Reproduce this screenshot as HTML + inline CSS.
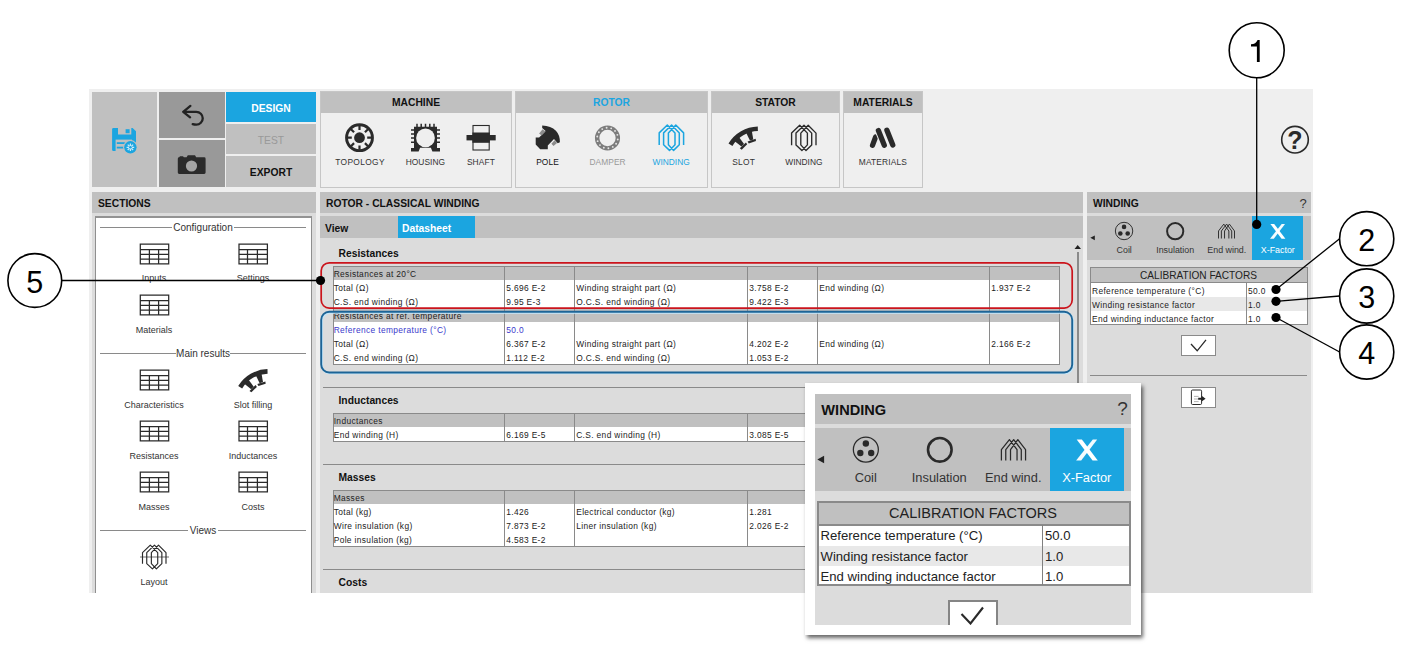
<!DOCTYPE html>
<html><head><meta charset="utf-8">
<style>
*{box-sizing:border-box;margin:0;padding:0}
html,body{width:1407px;height:657px;background:#fff;overflow:hidden}
body{position:relative;font-family:"Liberation Sans",sans-serif;color:#222}
.a{position:absolute;white-space:nowrap}
.app{left:89px;top:89px;width:1224px;height:504px;background:#efefef;overflow:hidden}
.g{background:#c0c0c0}
.dg{background:#999}
.bl{background:#1ba5e0}
.hd{font-weight:bold;font-size:10.3px;color:#111;line-height:23px}
.ctr{text-align:center}
.tl{font-size:8.4px;color:#333}
.sl{font-size:9px;color:#333}
.pn{border:1px solid #c6c6c6;background:#efefef}
.ph{left:0;top:0;right:0;height:21px;background:#c0c0c0;text-align:center;line-height:22px}
svg{position:absolute;overflow:visible}
.t{font-size:8.4px;letter-spacing:.36px;color:#222;line-height:14px}
.sec{font-weight:bold;font-size:10.3px;color:#111}
</style></head><body>
<div class="a app" id="app">

<div class="a g" style="left:3px;top:3px;width:65px;height:95px;"></div>
<div class="a dg" style="left:70px;top:3px;width:66px;height:46px;"></div>
<div class="a dg" style="left:70px;top:51px;width:66px;height:47px;"></div>
<div class="a bl hd ctr" style="left:137px;top:3px;width:90px;height:30px;line-height:33px;color:#fff">DESIGN</div>
<div class="a g hd ctr" style="left:137px;top:35px;width:90px;height:30px;line-height:33px;color:#999;font-weight:normal">TEST</div>
<div class="a g hd ctr" style="left:137px;top:67px;width:90px;height:31px;line-height:34px">EXPORT</div>
<div class="a pn" style="left:231px;top:2px;width:192px;height:97px"><div class="a ph hd" style="color:#111">MACHINE</div></div>
<div class="a pn" style="left:426px;top:2px;width:193px;height:97px"><div class="a ph hd" style="color:#1ba5e0">ROTOR</div></div>
<div class="a pn" style="left:622px;top:2px;width:129px;height:97px"><div class="a ph hd" style="color:#111">STATOR</div></div>
<div class="a pn" style="left:754px;top:2px;width:80px;height:97px"><div class="a ph hd" style="color:#111">MATERIALS</div></div>
<div class="a tl" style="left:171.077px;top:68px;width:200px;text-align:center;line-height:10px;color:#333;letter-spacing:0.355px">TOPOLOGY</div>
<div class="a tl" style="left:236.415px;top:68px;width:200px;text-align:center;line-height:10px;color:#333;letter-spacing:0.03px">HOUSING</div>
<div class="a tl" style="left:291.97px;top:68px;width:200px;text-align:center;line-height:10px;color:#333;letter-spacing:0.14px">SHAFT</div>
<div class="a tl" style="left:358.54px;top:68px;width:200px;text-align:center;line-height:10px;color:#111;letter-spacing:0.08px">POLE</div>
<div class="a tl" style="left:418.54px;top:68px;width:200px;text-align:center;line-height:10px;color:#999;letter-spacing:0.08px">DAMPER</div>
<div class="a tl" style="left:482.1px;top:68px;width:200px;text-align:center;line-height:10px;color:#1ba5e0;letter-spacing:0px">WINDING</div>
<div class="a tl" style="left:554.725px;top:68px;width:200px;text-align:center;line-height:10px;color:#333;letter-spacing:0.25px">SLOT</div>
<div class="a tl" style="left:614.9px;top:68px;width:200px;text-align:center;line-height:10px;color:#333;letter-spacing:0px">WINDING</div>
<div class="a tl" style="left:693.877px;top:68px;width:200px;text-align:center;line-height:10px;color:#333;letter-spacing:0.155px">MATERIALS</div>
<div class="a g hd" style="left:3px;top:103px;width:224px;height:21px;padding-left:6px">SECTIONS</div>
<div class="a g hd" style="left:231px;top:103px;width:763px;height:21px;padding-left:6px">ROTOR - CLASSICAL WINDING</div>
<div class="a g hd" style="left:998px;top:103px;width:224px;height:21px;padding-left:6px">WINDING</div>
<div class="a " style="left:3px;top:124px;width:224px;height:400px;background:#dcdcdc"></div>
<div class="a " style="left:6px;top:127px;width:217.4px;height:400px;background:#fff;border:1px solid #8f8f8f;border-top:2px solid #939393"></div>
<div class="a " style="left:11px;top:138px;width:206px;height:1px;background:#8a8a8a"></div>
<div class="a" style="left:83px;top:133.1px;width:62px;height:12px;background:#fff;text-align:center;font-size:10px;line-height:12px;color:#333">Configuration</div>
<div class="a " style="left:11px;top:264px;width:206px;height:1px;background:#8a8a8a"></div>
<div class="a" style="left:87px;top:259.1px;width:54px;height:12px;background:#fff;text-align:center;font-size:10px;line-height:12px;color:#333">Main results</div>
<div class="a " style="left:11px;top:441px;width:206px;height:1px;background:#8a8a8a"></div>
<div class="a" style="left:99px;top:436.1px;width:30px;height:12px;background:#fff;text-align:center;font-size:10px;line-height:12px;color:#333">Views</div>
<div class="a sl" style="left:-35px;top:184px;width:200px;text-align:center;line-height:10px;">Inputs</div>
<div class="a sl" style="left:64px;top:184px;width:200px;text-align:center;line-height:10px;">Settings</div>
<div class="a sl" style="left:-35px;top:235.5px;width:200px;text-align:center;line-height:10px;">Materials</div>
<div class="a sl" style="left:-35px;top:310.5px;width:200px;text-align:center;line-height:10px;">Characteristics</div>
<div class="a sl" style="left:64px;top:310.5px;width:200px;text-align:center;line-height:10px;">Slot filling</div>
<div class="a sl" style="left:-35px;top:361.5px;width:200px;text-align:center;line-height:10px;">Resistances</div>
<div class="a sl" style="left:64px;top:361.5px;width:200px;text-align:center;line-height:10px;">Inductances</div>
<div class="a sl" style="left:-35px;top:412.7px;width:200px;text-align:center;line-height:10px;">Masses</div>
<div class="a sl" style="left:64px;top:412.7px;width:200px;text-align:center;line-height:10px;">Costs</div>
<div class="a sl" style="left:-35px;top:487.7px;width:200px;text-align:center;line-height:10px;">Layout</div>
<div class="a " style="left:231px;top:124px;width:763px;height:400px;background:#dcdcdc"></div>
<div class="a g" style="left:231px;top:127px;width:763px;height:22px;"></div>
<div class="a hd" style="left:236px;top:127px;line-height:25.5px">View</div>
<div class="a bl hd" style="left:309px;top:127px;width:77px;height:22px;line-height:25.5px;color:#fff;padding-left:4px">Datasheet</div>
<div class="a sec" style="left:249.5px;top:158px;line-height:14px">Resistances</div>
<div class="a " style="left:243.5px;top:177px;width:727.5px;height:42.5px;background:#fff;border:1px solid #8a8a8a"></div>
<div class="a " style="left:244.5px;top:178px;width:725.5px;height:13px;background:#c0c0c0"></div>
<div class="a " style="left:415px;top:177px;width:1px;height:42.5px;background:#8a8a8a"></div>
<div class="a " style="left:485px;top:177px;width:1px;height:42.5px;background:#8a8a8a"></div>
<div class="a " style="left:658px;top:177px;width:1px;height:42.5px;background:#8a8a8a"></div>
<div class="a " style="left:728px;top:177px;width:1px;height:42.5px;background:#8a8a8a"></div>
<div class="a " style="left:900px;top:177px;width:1px;height:42.5px;background:#8a8a8a"></div>
<div class="a t" style="left:244.7px;top:177.8px;">Resistances at 20°C</div>
<div class="a t" style="left:244.7px;top:191.9px;color:#222">Total (Ω)</div>
<div class="a t" style="left:417.2px;top:191.9px;color:#222">5.696 E-2</div>
<div class="a t" style="left:487.2px;top:191.9px;color:#222">Winding straight part (Ω)</div>
<div class="a t" style="left:660.2px;top:191.9px;color:#222">3.758 E-2</div>
<div class="a t" style="left:730.2px;top:191.9px;color:#222">End winding (Ω)</div>
<div class="a t" style="left:902.2px;top:191.9px;color:#222">1.937 E-2</div>
<div class="a t" style="left:244.7px;top:205.9px;color:#222">C.S. end winding (Ω)</div>
<div class="a t" style="left:417.2px;top:205.9px;color:#222">9.95 E-3</div>
<div class="a t" style="left:487.2px;top:205.9px;color:#222">O.C.S. end winding (Ω)</div>
<div class="a t" style="left:660.2px;top:205.9px;color:#222">9.422 E-3</div>
<div class="a " style="left:243.5px;top:219.1px;width:727.5px;height:56.5px;background:#fff;border:1px solid #8a8a8a"></div>
<div class="a " style="left:244.5px;top:220.1px;width:725.5px;height:13px;background:#c0c0c0"></div>
<div class="a " style="left:415px;top:219.1px;width:1px;height:56.5px;background:#8a8a8a"></div>
<div class="a " style="left:485px;top:219.1px;width:1px;height:56.5px;background:#8a8a8a"></div>
<div class="a " style="left:658px;top:219.1px;width:1px;height:56.5px;background:#8a8a8a"></div>
<div class="a " style="left:728px;top:219.1px;width:1px;height:56.5px;background:#8a8a8a"></div>
<div class="a " style="left:900px;top:219.1px;width:1px;height:56.5px;background:#8a8a8a"></div>
<div class="a t" style="left:244.7px;top:219.9px;">Resistances at ref. temperature</div>
<div class="a t" style="left:244.7px;top:234px;color:#3a3acc">Reference temperature (°C)</div>
<div class="a t" style="left:417.2px;top:234px;color:#3a3acc">50.0</div>
<div class="a t" style="left:244.7px;top:248px;color:#222">Total (Ω)</div>
<div class="a t" style="left:417.2px;top:248px;color:#222">6.367 E-2</div>
<div class="a t" style="left:487.2px;top:248px;color:#222">Winding straight part (Ω)</div>
<div class="a t" style="left:660.2px;top:248px;color:#222">4.202 E-2</div>
<div class="a t" style="left:730.2px;top:248px;color:#222">End winding (Ω)</div>
<div class="a t" style="left:902.2px;top:248px;color:#222">2.166 E-2</div>
<div class="a t" style="left:244.7px;top:262px;color:#222">C.S. end winding (Ω)</div>
<div class="a t" style="left:417.2px;top:262px;color:#222">1.112 E-2</div>
<div class="a t" style="left:487.2px;top:262px;color:#222">O.C.S. end winding (Ω)</div>
<div class="a t" style="left:660.2px;top:262px;color:#222">1.053 E-2</div>
<div class="a " style="left:233.5px;top:298px;width:752px;height:1px;background:#8a8a8a"></div>
<div class="a sec" style="left:249.5px;top:305px;line-height:14px">Inductances</div>
<div class="a " style="left:243.5px;top:324.2px;width:727.5px;height:28.5px;background:#fff;border:1px solid #8a8a8a"></div>
<div class="a " style="left:244.5px;top:325.2px;width:725.5px;height:13px;background:#c0c0c0"></div>
<div class="a " style="left:415px;top:324.2px;width:1px;height:28.5px;background:#8a8a8a"></div>
<div class="a " style="left:485px;top:324.2px;width:1px;height:28.5px;background:#8a8a8a"></div>
<div class="a " style="left:658px;top:324.2px;width:1px;height:28.5px;background:#8a8a8a"></div>
<div class="a " style="left:728px;top:324.2px;width:1px;height:28.5px;background:#8a8a8a"></div>
<div class="a " style="left:900px;top:324.2px;width:1px;height:28.5px;background:#8a8a8a"></div>
<div class="a t" style="left:244.7px;top:325px;">Inductances</div>
<div class="a t" style="left:244.7px;top:339.1px;color:#222">End winding (H)</div>
<div class="a t" style="left:417.2px;top:339.1px;color:#222">6.169 E-5</div>
<div class="a t" style="left:487.2px;top:339.1px;color:#222">C.S. end winding (H)</div>
<div class="a t" style="left:660.2px;top:339.1px;color:#222">3.085 E-5</div>
<div class="a " style="left:233.5px;top:375px;width:752px;height:1px;background:#8a8a8a"></div>
<div class="a sec" style="left:249.5px;top:382px;line-height:14px">Masses</div>
<div class="a " style="left:243.5px;top:401.2px;width:727.5px;height:56.5px;background:#fff;border:1px solid #8a8a8a"></div>
<div class="a " style="left:244.5px;top:402.2px;width:725.5px;height:13px;background:#c0c0c0"></div>
<div class="a " style="left:415px;top:401.2px;width:1px;height:56.5px;background:#8a8a8a"></div>
<div class="a " style="left:485px;top:401.2px;width:1px;height:56.5px;background:#8a8a8a"></div>
<div class="a " style="left:658px;top:401.2px;width:1px;height:56.5px;background:#8a8a8a"></div>
<div class="a " style="left:728px;top:401.2px;width:1px;height:56.5px;background:#8a8a8a"></div>
<div class="a " style="left:900px;top:401.2px;width:1px;height:56.5px;background:#8a8a8a"></div>
<div class="a t" style="left:244.7px;top:402px;">Masses</div>
<div class="a t" style="left:244.7px;top:416.1px;color:#222">Total (kg)</div>
<div class="a t" style="left:417.2px;top:416.1px;color:#222">1.426</div>
<div class="a t" style="left:487.2px;top:416.1px;color:#222">Electrical conductor (kg)</div>
<div class="a t" style="left:660.2px;top:416.1px;color:#222">1.281</div>
<div class="a t" style="left:244.7px;top:430.1px;color:#222">Wire insulation (kg)</div>
<div class="a t" style="left:417.2px;top:430.1px;color:#222">7.873 E-2</div>
<div class="a t" style="left:487.2px;top:430.1px;color:#222">Liner insulation (kg)</div>
<div class="a t" style="left:660.2px;top:430.1px;color:#222">2.026 E-2</div>
<div class="a t" style="left:244.7px;top:444.1px;color:#222">Pole insulation (kg)</div>
<div class="a t" style="left:417.2px;top:444.1px;color:#222">4.583 E-2</div>
<div class="a " style="left:233.5px;top:479.5px;width:752px;height:1px;background:#8a8a8a"></div>
<div class="a sec" style="left:249.5px;top:486.7px;line-height:14px">Costs</div>
<div class="a " style="left:988px;top:163px;width:2px;height:345px;background:#8a8a8a"></div>
<svg style="left:985px;top:155px" width="8" height="6"><path d="M0.5 5 L3.7 1 L7 5 Z" fill="#222"/></svg>
<svg style="left:0;top:0" width="1224" height="504"><rect x="233.0" y="223.7" width="751" height="60.7" rx="8" fill="none" stroke="#c2e6fa" stroke-width="1.9"/><rect x="232.2" y="222.8" width="751" height="60.7" rx="8" fill="none" stroke="#1d6496" stroke-width="1.9"/><rect x="232.2" y="173.8" width="751" height="45.3" rx="8" fill="none" stroke="#cb141c" stroke-width="1.7"/></svg>
<div class="a " style="left:998px;top:124px;width:224px;height:400px;background:#dcdcdc"></div>
<div class="a g" style="left:998px;top:127px;width:224px;height:44px;"></div>
<div class="a bl" style="left:1163px;top:127px;width:51px;height:44px;"></div>
<div class="a " style="left:1210.5px;top:104.5px;font-size:13px;line-height:20px;color:#333">?</div>
<div class="a " style="left:935.2px;top:156.4px;width:200px;text-align:center;line-height:10px;color:#333;font-size:8.9px">Coil</div>
<div class="a " style="left:986.2px;top:156.4px;width:200px;text-align:center;line-height:10px;color:#333;font-size:8.9px">Insulation</div>
<div class="a " style="left:1037.8px;top:156.4px;width:200px;text-align:center;line-height:10px;color:#333;font-size:8.9px">End wind.</div>
<div class="a " style="left:1088.8px;top:156.4px;width:200px;text-align:center;line-height:10px;color:#fff;font-size:8.9px">X-Factor</div>
<div class="a " style="left:1001px;top:178px;width:218px;height:57.6px;background:#fff;border:1px solid #8a8a8a"></div>
<div class="a " style="left:1002px;top:179px;width:216px;height:15px;background:#c0c0c0;border-bottom:1px solid #8a8a8a"></div>
<div class="a " style="left:1009.5px;top:180.5px;width:200px;text-align:center;line-height:12px;font-size:10.1px;color:#222">CALIBRATION FACTORS</div>
<div class="a " style="left:1002px;top:208px;width:216px;height:14px;background:#e8e8e8"></div>
<div class="a " style="left:1156.5px;top:194px;width:1px;height:42px;background:#8a8a8a"></div>
<div class="a t" style="left:1003px;top:194.8px;">Reference temperature (°C)</div>
<div class="a t" style="left:1159px;top:194.8px;">50.0</div>
<div class="a t" style="left:1003px;top:208.8px;">Winding resistance factor</div>
<div class="a t" style="left:1159px;top:208.8px;">1.0</div>
<div class="a t" style="left:1003px;top:222.8px;">End winding inductance factor</div>
<div class="a t" style="left:1159px;top:222.8px;">1.0</div>
<div class="a " style="left:1092px;top:246px;width:35px;height:21px;background:#fff;border:1px solid #8a8a8a"></div>
<div class="a " style="left:1001px;top:286px;width:217px;height:1px;background:#8a8a8a"></div>
<div class="a " style="left:1092px;top:297.5px;width:35px;height:21px;background:#fff;border:1px solid #8a8a8a"></div>
<svg style="left:0;top:0;font-family:'Liberation Sans',sans-serif" width="1224" height="504" viewBox="89 89 1224 504">
<g>
<path d="M113.4 127.9 H132.6 L136 131.2 V149.7 Q136 151 134.7 151 H113.4 Q112.1 151 112.1 149.7 V129.2 Q112.1 127.9 113.4 127.9 Z" fill="#1ba5e0"/>
<rect x="118" y="127.5" width="13.3" height="7" fill="#c0c0c0"/>
<rect x="125.6" y="129.2" width="4" height="4" fill="#1ba5e0"/>
<rect x="115.6" y="139.6" width="16.4" height="11.8" fill="#c0c0c0"/>
<rect x="116.8" y="142.2" width="9.2" height="1.8" fill="#1ba5e0"/><rect x="116.8" y="146.7" width="7.4" height="1.8" fill="#1ba5e0"/>
<circle cx="130.4" cy="147.3" r="7.3" fill="#c0c0c0"/><circle cx="130.4" cy="147.3" r="6.2" fill="#1ba5e0"/>
<path d="M126.60 147.30 L134.20 147.30 M127.71 144.61 L133.09 149.99 M130.40 143.50 L130.40 151.10 M133.09 144.61 L127.71 149.99 " stroke="#c9e9f8" stroke-width="1.3" fill="none"/><circle cx="130.4" cy="147.3" r="1.3" fill="#1ba5e0"/>
</g>
<path d="M190.4 105.9 L183.2 111.8 L190.1 117.4 M183.6 111.8 H196.3 A6.45 6.45 0 0 1 196.3 124.7 Q194.2 124.7 192.7 124.2" fill="none" stroke="#222" stroke-width="2.3" stroke-linecap="round" stroke-linejoin="round"/>
<path d="M179.2 157.3 L180 156.3 H183 L183.8 157.3 H186.6 L187.8 155.2 H195 L196.2 157.3 H204.2 Q205.6 157.3 205.6 158.7 V172.6 Q205.6 174 204.2 174 H179.2 Q177.8 174 177.8 172.6 V158.7 Q177.8 157.3 179.2 157.3 Z" fill="#2a2a2a"/><circle cx="191.5" cy="166" r="5.6" fill="#a4a4a4"/>
<circle cx="359.5" cy="137.7" r="12.95" fill="none" stroke="#2a2a2a" stroke-width="2.9"/><circle cx="359.5" cy="137.7" r="5.4" fill="#2a2a2a"/>
<path d="M367.20 137.70 L371.50 137.70 M364.94 143.14 L367.99 146.19 M359.50 145.40 L359.50 149.70 M354.06 143.14 L351.01 146.19 M351.80 137.70 L347.50 137.70 M354.06 132.26 L351.01 129.21 M359.50 130.00 L359.50 125.70 M364.94 132.26 L367.99 129.21 " stroke="#2a2a2a" stroke-width="2.2" fill="none"/>
<path d="M414 126.8 H437 V148 H440 V151.5 H432.4 L430.9 147.7 H420.1 L418.6 151.5 H411 V148 H414 Z" fill="#2a2a2a"/><circle cx="425.5" cy="137.9" r="9.35" fill="#efefef"/>
<path d="M417.0 123.8 V127 M421.2 123.8 V127 M425.5 123.8 V127 M429.8 123.8 V127 M434.0 123.8 V127 M411 129.9 H414.2 M436.8 129.9 H440 M411 134.0 H414.2 M436.8 134.0 H440 M411 138.1 H414.2 M436.8 138.1 H440 M411 142.2 H414.2 M436.8 142.2 H440 " stroke="#2a2a2a" stroke-width="1.5" fill="none"/>
<rect x="473" y="125.5" width="16.2" height="24.5" fill="#efefef" stroke="#2a2a2a" stroke-width="1.1"/><rect x="472.4" y="132.5" width="17.4" height="10.3" fill="#2a2a2a"/><rect x="466.5" y="135" width="29.2" height="5.4" fill="#2a2a2a"/>
<path d="M542.2 125.6 Q551 126.2 555.9 130.7 Q560 135 559.9 142.2 L557.7 143.3 L554 139.1 L547.8 145.6 V149.3 H540.2 L535.7 144.5 V137.4 H539.1 L545.6 131 L542.2 127.9 Z" fill="#2a2a2a"/>
<path d="M539.1 133.6 L542.6 129.2 L545.4 131.4 L541.6 135.4 Z M551.4 143.7 L554.6 140.2 L557.1 143.1 L553.5 145.9 Z" fill="#8c8c8c"/>
<circle cx="607.5" cy="138" r="10.35" fill="none" stroke="#7c7c7c" stroke-width="4.4"/>
<circle cx="617.75" cy="139.44" r="0.95" fill="#e6e6e6"/>
<circle cx="616.11" cy="143.74" r="0.95" fill="#e6e6e6"/>
<circle cx="612.76" cy="146.91" r="0.95" fill="#e6e6e6"/>
<circle cx="608.38" cy="148.31" r="0.95" fill="#e6e6e6"/>
<circle cx="603.81" cy="147.67" r="0.95" fill="#e6e6e6"/>
<circle cx="599.98" cy="145.12" r="0.95" fill="#e6e6e6"/>
<circle cx="597.64" cy="141.15" r="0.95" fill="#e6e6e6"/>
<circle cx="597.25" cy="136.56" r="0.95" fill="#e6e6e6"/>
<circle cx="598.89" cy="132.26" r="0.95" fill="#e6e6e6"/>
<circle cx="602.24" cy="129.09" r="0.95" fill="#e6e6e6"/>
<circle cx="606.62" cy="127.69" r="0.95" fill="#e6e6e6"/>
<circle cx="611.19" cy="128.33" r="0.95" fill="#e6e6e6"/>
<circle cx="615.02" cy="130.88" r="0.95" fill="#e6e6e6"/>
<circle cx="617.36" cy="134.85" r="0.95" fill="#e6e6e6"/>
<path d="M659.20 145.00 L659.20 132.90 L667.30 125.00 L675.00 132.90 L675.00 144.70 L669.50 150.40 L663.60 144.70 L663.60 132.90 L671.60 125.00 L679.30 132.90 L679.30 144.70 L673.60 150.40 L668.40 144.70 L668.40 132.90 L675.80 125.00 L683.60 132.90 L683.60 145.00" fill="none" stroke="#1ba5e0" stroke-width="1.5" stroke-linejoin="round"/>
<path d="M791.60 145.20 L791.60 133.10 L799.70 125.20 L807.40 133.10 L807.40 144.90 L801.90 150.60 L796.00 144.90 L796.00 133.10 L804.00 125.20 L811.70 133.10 L811.70 144.90 L806.00 150.60 L800.80 144.90 L800.80 133.10 L808.20 125.20 L816.00 133.10 L816.00 145.20" fill="none" stroke="#2a2a2a" stroke-width="1.35" stroke-linejoin="round"/>
<path d="M728.51 143.51 A35.3 35.3 0 0 1 757.78 126.51 L757.90 131.11 A30.7 30.7 0 0 0 732.44 145.90 Z" fill="#2a2a2a"/>
<path d="M734.63 141.17 L741.50 146.53 L744.04 144.08 L738.92 137.03 Z" fill="#2a2a2a"/>
<path d="M739.81 148.33 L741.68 149.66 L747.16 144.37 L745.90 142.45 Z" fill="#2a2a2a"/>
<path d="M746.11 132.71 L749.94 140.54 L753.29 139.44 L751.78 130.86 Z" fill="#2a2a2a"/>
<path d="M747.63 141.41 L748.73 143.43 L755.97 141.08 L755.67 138.80 Z" fill="#2a2a2a"/>
<path d="M875.6 137 L872.5 145.4" stroke="#2a2a2a" stroke-width="5.2" stroke-linecap="round"/><path d="M878.4 130.6 L884.3 145.3" stroke="#efefef" stroke-width="7.2" stroke-linecap="round"/><path d="M878.4 130.6 L884.3 145.3 M886.9 130.3 L892.8 145" stroke="#2a2a2a" stroke-width="5.3" stroke-linecap="round"/>
<circle cx="1295" cy="139.7" r="13.3" fill="none" stroke="#2a2a2a" stroke-width="1.6"/><text x="1295" y="148.8" text-anchor="middle" font-size="25" font-weight="bold" fill="#2a2a2a">?</text>
<path d="M140.3 244.2 h28.4 v19.7 h-28.4 Z M140.3 249.7 h28.4 M140.3 254.39999999999998 h28.4 M140.3 259.09999999999997 h28.4 M149.4 249.7 v14.2 M158.60000000000002 249.7 v14.2" fill="none" stroke="#2a2a2a" stroke-width="1.25"/>
<path d="M239 244.2 h28.4 v19.7 h-28.4 Z M239 249.7 h28.4 M239 254.39999999999998 h28.4 M239 259.09999999999997 h28.4 M247.5 249.7 v14.2 M257.4 249.7 v14.2" fill="none" stroke="#2a2a2a" stroke-width="1.25"/>
<path d="M140.3 295.2 h28.4 v19.7 h-28.4 Z M140.3 300.7 h28.4 M140.3 305.4 h28.4 M140.3 310.09999999999997 h28.4 M149.4 300.7 v14.2 M158.60000000000002 300.7 v14.2" fill="none" stroke="#2a2a2a" stroke-width="1.25"/>
<path d="M140.3 370.2 h28.4 v19.7 h-28.4 Z M140.3 375.7 h28.4 M140.3 380.4 h28.4 M140.3 385.09999999999997 h28.4 M149.4 375.7 v14.2 M158.60000000000002 375.7 v14.2" fill="none" stroke="#2a2a2a" stroke-width="1.25"/>
<path d="M140.3 421.2 h28.4 v19.7 h-28.4 Z M140.3 426.7 h28.4 M140.3 431.4 h28.4 M140.3 436.09999999999997 h28.4 M149.4 426.7 v14.2 M158.60000000000002 426.7 v14.2" fill="none" stroke="#2a2a2a" stroke-width="1.25"/>
<path d="M239 421.2 h28.4 v19.7 h-28.4 Z M239 426.7 h28.4 M239 431.4 h28.4 M239 436.09999999999997 h28.4 M247.5 426.7 v14.2 M257.4 426.7 v14.2" fill="none" stroke="#2a2a2a" stroke-width="1.25"/>
<path d="M140.3 472.2 h28.4 v19.7 h-28.4 Z M140.3 477.7 h28.4 M140.3 482.4 h28.4 M140.3 487.09999999999997 h28.4 M149.4 477.7 v14.2 M158.60000000000002 477.7 v14.2" fill="none" stroke="#2a2a2a" stroke-width="1.25"/>
<path d="M239 472.2 h28.4 v19.7 h-28.4 Z M239 477.7 h28.4 M239 482.4 h28.4 M239 487.09999999999997 h28.4 M247.5 477.7 v14.2 M257.4 477.7 v14.2" fill="none" stroke="#2a2a2a" stroke-width="1.25"/>
<path d="M238.21 386.11 A35.3 35.3 0 0 1 267.48 369.11 L267.60 373.71 A30.7 30.7 0 0 0 242.14 388.50 Z" fill="#2a2a2a"/>
<path d="M244.33 383.77 L251.20 389.13 L253.74 386.68 L248.62 379.63 Z" fill="#2a2a2a"/>
<path d="M249.51 390.93 L251.38 392.26 L256.86 386.97 L255.60 385.05 Z" fill="#2a2a2a"/>
<path d="M255.81 375.31 L259.64 383.14 L262.99 382.04 L261.48 373.46 Z" fill="#2a2a2a"/>
<path d="M257.33 384.01 L258.43 386.03 L265.67 383.68 L265.37 381.40 Z" fill="#2a2a2a"/>
<path d="M140 557 H169" stroke="#9a9a9a" stroke-width="1.4"/>
<path d="M142.50 563.86 L142.50 552.57 L150.30 545.20 L157.72 552.57 L157.72 563.58 L152.42 568.90 L146.74 563.58 L146.74 552.57 L154.44 545.20 L161.86 552.57 L161.86 563.58 L156.37 568.90 L151.36 563.58 L151.36 552.57 L158.49 545.20 L166.00 552.57 L166.00 563.86" fill="none" stroke="#2a2a2a" stroke-width="1.15" stroke-linejoin="round"/>
<path d="M1090.3 237.8 L1094.8 235.4 V240.2 Z" fill="#222"/>
<circle cx="1124.05" cy="231" r="8.7" fill="none" stroke="#2a2a2a" stroke-width="0.95"/><circle cx="1124.05" cy="226.9" r="2.3" fill="#2a2a2a"/><circle cx="1120.3" cy="233.5" r="2.3" fill="#2a2a2a"/><circle cx="1127.7" cy="233.5" r="2.3" fill="#2a2a2a"/>
<circle cx="1175.2" cy="231.2" r="8.1" fill="none" stroke="#2a2a2a" stroke-width="2"/>
<path d="M1218.50 238.50 L1218.50 230.97 L1223.81 224.10 L1228.86 230.97 L1228.86 238.50 M1221.39 238.50 L1221.39 230.97 L1226.63 224.10 L1231.69 230.97 L1231.69 238.50 M1224.54 238.50 L1224.54 230.97 L1229.39 224.10 L1234.51 230.97 L1234.51 238.50 " fill="none" stroke="#2a2a2a" stroke-width="0.95" stroke-linejoin="round"/>
<path d="M1281.7 223.9 H1285 L1273.8 238.8 H1270 Z" fill="#fff" opacity="0.95"/><path d="M1270.4 223.9 H1274.2 L1285.4 238.8 H1281.6 Z" fill="#fff"/>
<path d="M1191 344 L1197.2 350.8 L1206 339.8" fill="none" stroke="#2a2a2a" stroke-width="1.3"/>
<rect x="1191.4" y="390" width="10.2" height="14.5" rx="1.2" fill="#fff" stroke="#2a2a2a" stroke-width="1"/><path d="M1194 396.4 H1198.6 M1194 399 H1198.6 M1194 401.6 H1198.6" stroke="#aaa" stroke-width="0.9"/><path d="M1198.2 397.7 H1201.6 V395.8 L1205.6 398.7 L1201.6 401.6 V399.7 H1198.2 Z" fill="#222"/>
</svg>
</div>
<div class="a" style="left:805px;top:383px;width:336px;height:252px;background:#fff;box-shadow:1.5px 2.5px 4px rgba(0,0,0,.6)"></div>
<div class="a" id="pop" style="left:815px;top:394px;width:316px;height:231px;background:#dcdcdc;overflow:hidden">
<div class="a" style="left:0px;top:0px;width:316px;height:30px;background:#c0c0c0"></div>
<div class="a" style="left:6.3px;top:7.5px;line-height:16px;font-weight:bold;font-size:14.6px;color:#111">WINDING</div>
<div class="a" style="left:157.5px;top:5px;width:300px;text-align:center;line-height:20px;font-size:19px;color:#333">?</div>
<div class="a" style="left:0px;top:34px;width:316px;height:63px;background:#c0c0c0"></div>
<div class="a" style="left:235px;top:34px;width:74px;height:63px;background:#1ba5e0"></div>
<div class="a" style="left:-99.25px;top:75.5px;width:300px;text-align:center;line-height:16px;color:#333;font-size:12.85px">Coil</div>
<div class="a" style="left:-25.75px;top:75.5px;width:300px;text-align:center;line-height:16px;color:#333;font-size:12.85px">Insulation</div>
<div class="a" style="left:48.25px;top:75.5px;width:300px;text-align:center;line-height:16px;color:#333;font-size:12.85px">End wind.</div>
<div class="a" style="left:121.75px;top:75.5px;width:300px;text-align:center;line-height:16px;color:#fff;font-size:12.85px">X-Factor</div>
<div class="a" style="left:2px;top:106.8px;width:314px;height:85.5px;background:#fff;border:2px solid #8a8a8a"></div>
<div class="a" style="left:4px;top:108.8px;width:310px;height:23.2px;background:#c0c0c0;border-bottom:2px solid #8a8a8a"></div>
<div class="a" style="left:8px;top:111px;width:300px;text-align:center;line-height:16px;font-size:14.5px;color:#222">CALIBRATION FACTORS</div>
<div class="a" style="left:4px;top:151.5px;width:310px;height:20px;background:#e8e8e8"></div>
<div class="a" style="left:226.5px;top:131px;width:1.5px;height:60px;background:#808080"></div>
<div class="a" style="left:5.5px;top:134.4px;line-height:16px;font-size:13.14px;color:#222">Reference temperature (°C)</div>
<div class="a" style="left:230px;top:134.4px;line-height:16px;font-size:13.14px;color:#222">50.0</div>
<div class="a" style="left:5.5px;top:154.7px;line-height:16px;font-size:13.14px;color:#222">Winding resistance factor</div>
<div class="a" style="left:230px;top:154.7px;line-height:16px;font-size:13.14px;color:#222">1.0</div>
<div class="a" style="left:5.5px;top:175px;line-height:16px;font-size:13.14px;color:#222">End winding inductance factor</div>
<div class="a" style="left:230px;top:175px;line-height:16px;font-size:13.14px;color:#222">1.0</div>
<div class="a" style="left:133px;top:205.6px;width:50px;height:30px;background:#fff;border:2px solid #858585"></div>
<svg style="left:0;top:0" width="316" height="231" viewBox="815 394 316 231">
<path d="M817.3 459.5 L824.1 455.7 V463.2 Z" fill="#222"/>
<circle cx="865.85" cy="449.6" r="12.5" fill="none" stroke="#2a2a2a" stroke-width="1.25"/><circle cx="865.85" cy="443.5" r="3.2" fill="#2a2a2a"/><circle cx="860.3" cy="453" r="3.2" fill="#2a2a2a"/><circle cx="871.2" cy="453" r="3.2" fill="#2a2a2a"/>
<circle cx="939.8" cy="449.8" r="11.8" fill="none" stroke="#2a2a2a" stroke-width="2.6"/>
<path d="M1001.40 460.50 L1001.40 449.55 L1009.42 439.60 L1017.04 449.55 L1017.04 460.50 M1005.76 460.50 L1005.76 449.55 L1013.68 439.60 L1021.30 449.55 L1021.30 460.50 M1010.51 460.50 L1010.51 449.55 L1017.83 439.60 L1025.56 449.55 L1025.56 460.50 " fill="none" stroke="#2a2a2a" stroke-width="1.25" stroke-linejoin="round"/>
<path d="M1092.8 439.4 H1097.2 L1081.2 460.5 H1076.1 Z" fill="#fff" opacity="0.95"/><path d="M1076.7 439.4 H1081.9 L1097.8 460.5 H1092.6 Z" fill="#fff"/>
<path d="M961.5 614 L970.5 623.5 L983 607.5" fill="none" stroke="#2a2a2a" stroke-width="2.1"/>
</svg>
</div>
<svg style="left:0;top:0;font-family:'Liberation Sans',sans-serif" width="1407" height="657">
<line x1="1256.7" y1="77.8" x2="1256.7" y2="224.4" stroke="#000" stroke-width="1.3"/>
<circle cx="1256.7" cy="224.4" r="4.6" fill="#000"/>
<circle cx="1256.7" cy="50.3" r="27.5" fill="#fff" stroke="#000" stroke-width="1.6"/>
<path d="M1259.7 62.0 H1256.9 V46.4 H1251.0 V44.3 Q1255.9 44.0 1257.6000000000001 39.9 H1259.7 Z" fill="#000"/>
<line x1="1339.6" y1="238.7" x2="1276" y2="289.5" stroke="#000" stroke-width="1.3"/>
<circle cx="1276" cy="289.5" r="4.6" fill="#000"/>
<circle cx="1366.7" cy="238.7" r="27.1" fill="#fff" stroke="#000" stroke-width="1.6"/>
<text x="1366.7" y="251.0" text-anchor="middle" font-size="30.5" fill="#000">2</text>
<line x1="1339.6" y1="296.0" x2="1276" y2="301.3" stroke="#000" stroke-width="1.3"/>
<circle cx="1276" cy="301.3" r="4.6" fill="#000"/>
<circle cx="1366.7" cy="296" r="27.1" fill="#fff" stroke="#000" stroke-width="1.6"/>
<text x="1366.7" y="308.3" text-anchor="middle" font-size="30.5" fill="#000">3</text>
<line x1="1339.6" y1="352.0" x2="1276" y2="317.5" stroke="#000" stroke-width="1.3"/>
<circle cx="1276" cy="317.5" r="4.6" fill="#000"/>
<circle cx="1366.7" cy="352" r="27.1" fill="#fff" stroke="#000" stroke-width="1.6"/>
<text x="1366.7" y="364.3" text-anchor="middle" font-size="30.5" fill="#000">4</text>
<line x1="61.7" y1="280.5" x2="320.5" y2="280.5" stroke="#000" stroke-width="1.3"/>
<circle cx="320.5" cy="280.5" r="4.6" fill="#000"/>
<circle cx="34.8" cy="280.5" r="26.9" fill="#fff" stroke="#000" stroke-width="1.6"/>
<text x="34.8" y="292.8" text-anchor="middle" font-size="30.5" fill="#000">5</text>
</svg>
</body></html>
